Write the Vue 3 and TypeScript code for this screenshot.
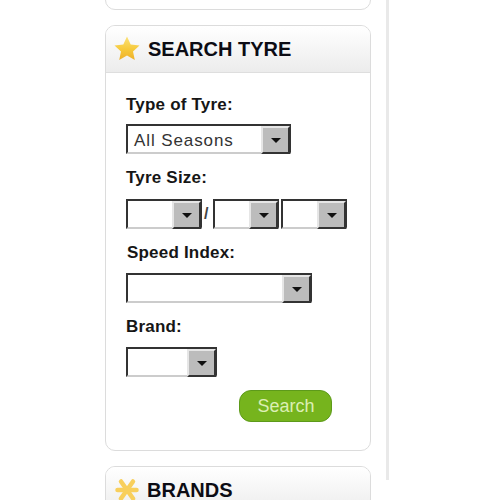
<script setup lang="ts">
const sizes = [76, 66, 66]
</script>

<template>
  <div class="page">
    <div class="sidebar">
      <div class="card card-top"></div>

      <div class="card card-search">
        <div class="card-head">
          <svg class="head-icon" width="26" height="26" viewBox="0 0 26 26">
            <defs>
              <linearGradient id="star" x1="0" y1="0" x2="0" y2="1">
                <stop offset="0" stop-color="#fbe27a" />
                <stop offset="0.55" stop-color="#f6c93a" />
                <stop offset="1" stop-color="#eeb02c" />
              </linearGradient>
            </defs>
            <path d="M13 .5l3.700 8 8.800 1-6.500 5.900 1.800 8.600-7.800-4.400-7.800 4.400 1.800-8.600-6.500-5.900 8.800-1z" fill="url(#star)" />
          </svg>
          <span class="head-title">SEARCH TYRE</span>
        </div>
        <div class="card-body">
          <div class="label">Type of Tyre:</div>
          <div class="select select-type">
            <span class="select-value">All Seasons</span>
            <span class="select-btn"><i class="arrow"></i></span>
          </div>

          <div class="label label-size">Tyre Size:</div>
          <div class="size-row">
            <template v-for="(w, i) in sizes" :key="i">
              <div class="select" :style="{ width: w + 'px' }">
                <span class="select-value"></span>
                <span class="select-btn"><i class="arrow"></i></span>
              </div>
              <span v-if="i === 0" class="slash">/</span>
            </template>
          </div>

          <div class="label label-speed">Speed Index:</div>
          <div class="select select-speed">
            <span class="select-value"></span>
            <span class="select-btn"><i class="arrow"></i></span>
          </div>

          <div class="label label-brand">Brand:</div>
          <div class="select select-brand">
            <span class="select-value"></span>
            <span class="select-btn"><i class="arrow"></i></span>
          </div>

          <div class="actions">
            <button class="search-btn" type="button">Search</button>
          </div>
        </div>
      </div>

      <div class="card card-brands">
        <div class="card-head card-head-brands">
          <svg class="head-icon" width="26" height="26" viewBox="0 0 26 26">
            <g stroke="#f8cf5c" stroke-width="4.500" stroke-linecap="round">
              <path d="M13 13L7 4.500" />
              <path d="M13 13L19 4.500" />
              <path d="M13 13L3.500 13" />
              <path d="M13 13L22.500 13" />
              <path d="M13 13L7 21.500" />
              <path d="M13 13L19 21.500" />
            </g>
          </svg>
          <span class="head-title">BRANDS</span>
        </div>
      </div>
    </div>
  </div>
</template>

<style>
html, body { margin: 0; background: #fff; }
</style>

<style scoped>
.page { width: 500px; height: 500px; overflow: hidden; background: #fff; font-family: "Liberation Sans", Arial, sans-serif; }
.sidebar { margin-left: 105px; width: 266px; height: 500px; padding-right: 15px; border-right: 3px solid #e9e9e9; }
.card { box-sizing: border-box; width: 266px; border: 1px solid #dcdcdc; border-radius: 10px; background: #fff; overflow: hidden; }
.card-top { height: 30px; margin-top: -20px; margin-bottom: 15px; }
.card-search { height: 426px; margin-bottom: 15px; }
.card-brands { height: 80px; }
.card-head { display: flex; align-items: center; height: 46px; padding-left: 8px; gap: 8px; background: linear-gradient(#ffffff, #ececec); border-bottom: 1px solid #dedede; }
.card-head-brands { gap: 7px; }
.head-icon { flex: none; }
.head-title { font-size: 20px; font-weight: 700; color: #0c0c14; }
.card-body { padding: 23px 0 0 20px; }
.label { font-size: 17px; line-height: 18px; font-weight: 700; color: #161616; letter-spacing: 0.2px; }
.label-size { margin-top: 15px; }
.label-speed { margin-top: 15px; margin-left: 1px; }
.label-brand { margin-top: 15px; }
.select { box-sizing: border-box; display: flex; height: 30px; margin-top: 11px; border-top: 2px solid #333; border-left: 2px solid #333; border-right: 1px solid #333; border-bottom: 2px solid #ccc; background: #fff; }
.select-type { width: 165px; margin-top: 10px; }
.select-speed { width: 186px; }
.select-brand { width: 91px; }
.select-value { flex: 1; min-width: 0; padding: 3px 0 0 6px; font-size: 17px; line-height: 23px; color: #333; white-space: nowrap; letter-spacing: 0.9px; }
.select-btn { box-sizing: border-box; flex: none; display: flex; align-items: center; justify-content: center; width: 29px; margin-bottom: -2px; background: #bcbcbc; border-top: 2px solid #e6e6e6; border-left: 2px solid #e6e6e6; border-right: 2px solid #333; border-bottom: 2px solid #333; }
.arrow { width: 0; height: 0; border-left: 5px solid transparent; border-right: 5px solid transparent; border-top: 5px solid #111; }
.size-row { display: flex; align-items: center; margin-top: 12px; }
.size-row .select { margin-top: 0; margin-right: 2px; }
.slash { width: 9px; font-size: 16px; font-weight: 700; color: #444; text-align: left; }
.actions { display: flex; justify-content: flex-end; margin-top: 13px; padding-right: 38px; }
.search-btn { box-sizing: border-box; width: 93px; height: 32px; padding: 0 0 0 1px; border: 1px solid #5d9a1a; border-radius: 12px; background: #76b41d; color: #dcefb4; font-family: inherit; font-size: 18px; }
</style>
